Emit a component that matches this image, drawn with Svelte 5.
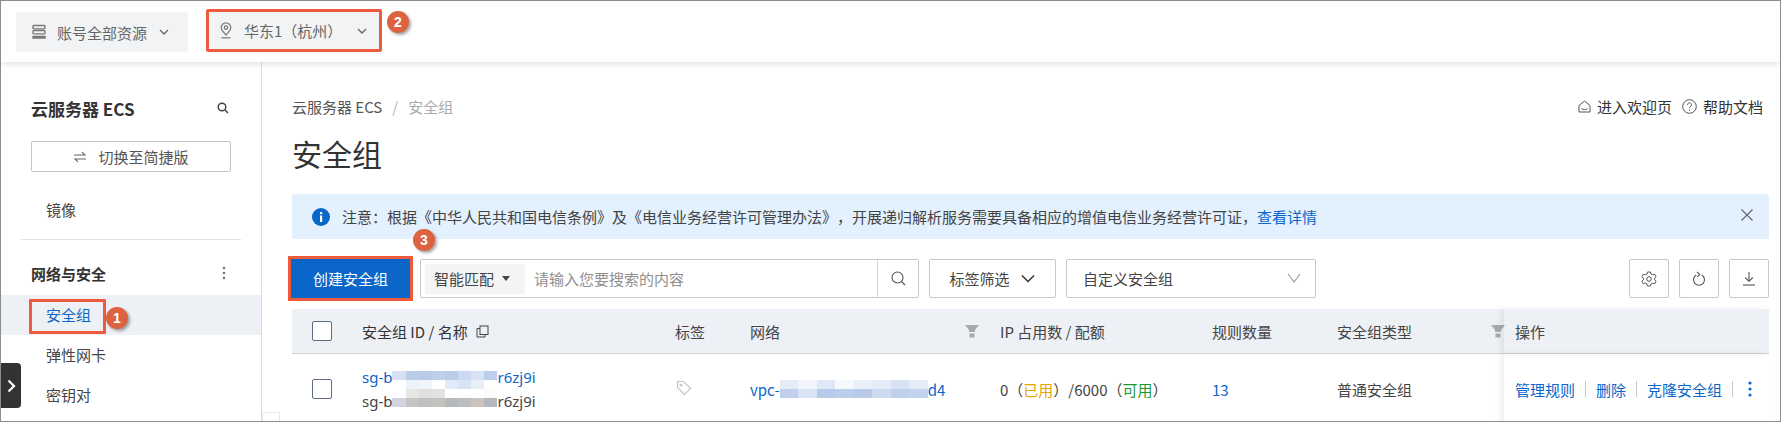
<script>
  const menu = ['弹性网卡', '密钥对'];
  const columns = [
    { label: '标签', width: 75 },
    { label: '网络', width: 250, filter: true },
    { label: 'IP 占用数 / 配额', width: 212 },
    { label: '规则数量', width: 125 },
    { label: '安全组类型', width: 167, filter: true }
  ];
  // blurred ids: each tile is [upper colour, lower colour]
  const blurTop = [['#d6e0f2', '#fff'], ['#bccdea', '#eef3fa'], ['#b9cbe9', '#f0f4fb'], ['#bfcfec', '#fff'], ['#bccdea', '#e2eaf7'], ['#ccd9f0', '#d8e3f4'], ['#d9e3f4', '#e9eff9'], ['#bdcdec', '#fff']];
  const blurBottom = [['#fff', '#d3d4e2'], ['#e6e6e5', '#c6c4c2'], ['#e0e0de', '#c0bfbd'], ['#e3e3e1', '#c3c2bf'], ['#fff', '#b5b9bd'], ['#fff', '#bdbec1'], ['#fff', '#ccc4bc'], ['#fbfbfb', '#b2b8be']];
  const blurVpc = [['#e4ecf8', '#bfcfec'], ['#f1f5fb', '#d8e3f4'], ['#dfe8f6', '#b8cae9'], ['#f6f8fc', '#bdcdec'], ['#eaf0fa', '#b9cbe9'], ['#e4ecf8', '#cedaf0'], ['#d6e1f3', '#bfcfec'], ['#e4ecf8', '#c3d2ee']];
</script>

<div class="page">
  <header class="topbar">
    <button class="scope">
      <svg width="16" height="16" viewBox="0 0 16 16" fill="none" stroke="#777" stroke-width="1.4"><rect x="2" y="1.500" width="12" height="3.400" rx="1"/><rect x="2" y="6.500" width="12" height="3.400" rx="1"/><path d="M2 12.500h12v1.500H2z"/></svg>
      <span class="scope-name">账号全部资源</span>
      <svg class="chev" width="12" height="12" viewBox="0 0 12 12" fill="none" stroke="#666" stroke-width="1.300"><path d="M2 4l4 4 4-4"/></svg>
    </button>
    <button class="scope region">
      <svg width="14" height="17" viewBox="0 0 14 17" fill="none" stroke="#777" stroke-width="1.200"><path d="M7 13C4.500 10.500 2.200 8.200 2.200 5.600a4.800 4.800 0 0 1 9.600 0C11.800 8.200 9.500 10.500 7 13z"/><circle cx="7" cy="5.600" r="1.700"/><path d="M2.500 15.800h9"/></svg>
      <span class="scope-name">华东1（杭州）</span>
      <svg class="chev" width="12" height="12" viewBox="0 0 12 12" fill="none" stroke="#666" stroke-width="1.300"><path d="M2 4l4 4 4-4"/></svg>
    </button>
  </header>

  <div class="content">
    <aside class="sidebar">
      <div class="side-title">
        <strong>云服务器 ECS</strong>
        <svg width="12" height="12" viewBox="0 0 12 12" fill="none" stroke="#444" stroke-width="1.500"><circle cx="5" cy="5" r="3.800"/><path d="M8 8l3 3"/></svg>
      </div>
      <button class="switch">
        <svg width="14" height="12" viewBox="0 0 14 12" fill="none" stroke="#666" stroke-width="1.100"><path d="M1 4h11L9 1.200M13 8H2l3 2.800"/></svg>
        切换至简捷版
      </button>
      <div class="item first">镜像</div>
      <div class="side-rule"></div>
      <div class="group">
        <strong>网络与安全</strong>
        <svg width="4" height="14" viewBox="0 0 4 14" fill="#777"><circle cx="2" cy="2" r="1.300"/><circle cx="2" cy="7" r="1.300"/><circle cx="2" cy="12" r="1.300"/></svg>
      </div>
      <div class="item active">安全组</div>
      {#each menu as m}
        <div class="item">{m}</div>
      {/each}
    </aside>

    <main class="main">
      <div class="crumbs">
        <div><span class="crumb">云服务器 ECS</span><span class="slash">/</span><span class="current">安全组</span></div>
        <div class="links">
          <svg width="13" height="13" viewBox="0 0 13 13" fill="none" stroke="#555" stroke-width="1"><path d="M1 5.500L6.500 1 12 5.500V12H1z"/><path d="M3.500 8.500c1.500 1.500 4.500 1.500 6 0"/></svg>
          <span class="link-text">进入欢迎页</span>
          <svg class="help" width="15" height="15" viewBox="0 0 15 15" fill="none" stroke="#555" stroke-width="1"><circle cx="7.500" cy="7.500" r="6.800"/><path d="M5.500 5.800a2 2 0 1 1 3.100 1.700c-.8.500-1.100.9-1.100 1.700M7.500 10.500v1.200"/></svg>
          <span class="link-text">帮助文档</span>
        </div>
      </div>
      <h1>安全组</h1>

      <div class="notice">
        <svg width="18" height="18" viewBox="0 0 18 18"><circle cx="9" cy="9" r="9" fill="#0a66c8"/><rect x="8" y="7.500" width="2.200" height="6.500" fill="#fff"/><rect x="8" y="4" width="2.200" height="2.200" fill="#fff"/></svg>
        <p>注意：根据《中华人民共和国电信条例》及《电信业务经营许可管理办法》，开展递归解析服务需要具备相应的增值电信业务经营许可证，<a href="#top">查看详情</a></p>
        <svg class="close" width="12" height="12" viewBox="0 0 12 12" fill="none" stroke="#666" stroke-width="1.200"><path d="M.5.500l11 11M11.500.500l-11 11"/></svg>
      </div>

      <div class="toolbar">
        <button class="create">创建安全组</button>
        <div class="search">
          <div class="match">智能匹配<i class="caret"></i></div>
          <span class="placeholder">请输入您要搜索的内容</span>
          <div class="search-btn">
            <svg width="15" height="15" viewBox="0 0 15 15" fill="none" stroke="#555" stroke-width="1.100"><circle cx="6.500" cy="6.500" r="5.500"/><path d="M10.500 10.500l3.500 3.500"/></svg>
          </div>
        </div>
        <button class="tag-filter">标签筛选
          <svg width="16" height="10" viewBox="0 0 16 10" fill="none" stroke="#333" stroke-width="1.500"><path d="M2 1.500l6 6 6-6"/></svg>
        </button>
        <div class="select">自定义安全组
          <svg width="14" height="11" viewBox="0 0 14 11" fill="none" stroke="#999" stroke-width="1.100"><path d="M1 1l6 8 6-8"/></svg>
        </div>
        <div class="tools">
          <button class="tool" aria-label="设置">
            <svg width="16" height="16" viewBox="0 0 16 16" fill="none" stroke="#555" stroke-width="1"><path d="M6.500 1h3l.5 2 1.800.9 1.900-.7 1.400 2.600-1.500 1.300v1.800l1.500 1.300-1.400 2.600-1.900-.7-1.800.9-.5 2h-3l-.5-2-1.800-.9-1.900.7L.9 10.200l1.500-1.300V7.100L.9 5.800l1.400-2.600 1.900.7L6 3z"/><circle cx="8" cy="8" r="2.300"/></svg>
          </button>
          <button class="tool" aria-label="刷新">
            <svg width="14" height="16" viewBox="0 0 14 16" fill="none" stroke="#555" stroke-width="1.100"><path d="M9.800 4A5.500 5.500 0 1 1 4.200 4"/><path d="M5 1l2.800 2.400L5 5.800"/></svg>
          </button>
          <button class="tool" aria-label="下载">
            <svg width="14" height="15" viewBox="0 0 14 15" fill="none" stroke="#555" stroke-width="1.100"><path d="M7 1v9M3.200 6.500L7 10.300l3.800-3.800"/><path d="M1 14h12"/></svg>
          </button>
        </div>
      </div>

      <div class="table">
        <div class="row head">
          <div class="cell-check"><span class="check"></span></div>
          <div class="col-id">安全组 ID / 名称
            <svg width="13" height="13" viewBox="0 0 13 13" fill="none" stroke="#444" stroke-width="1"><rect x="4" y="1" width="8" height="8.500"/><path d="M4 3.500H1V12h8V9.500"/></svg>
          </div>
          {#each columns as c}
            <div class="col" style="width: {c.width}px">
              {c.label}
              {#if c.filter}
                <svg class="funnel" width="14" height="14" viewBox="0 0 14 14" fill="#a9a9a9"><path d="M0 1h14L10 6v2H4V6z"/><rect x="4.500" y="9.500" width="5" height="4"/></svg>
              {/if}
            </div>
          {/each}
          <div class="col-ops head-ops">操作</div>
        </div>
        <div class="row body-row">
          <div class="cell-check"><span class="check"></span></div>
          <div class="col-id ids">
            <div class="id-line blue">sg-b<span class="mosaic up">{#each blurTop as b}<i style="background: linear-gradient({b[0]} 50%, {b[1]} 50%)"></i>{/each}</span>r6zj9i</div>
            <div class="id-line">sg-b<span class="mosaic down">{#each blurBottom as b}<i style="background: linear-gradient({b[0]} 50%, {b[1]} 50%)"></i>{/each}</span>r6zj9i</div>
          </div>
          <div class="col" style="width: 75px">
            <svg class="tag" width="16" height="16" viewBox="0 0 16 16" fill="none" stroke="#c4c4c4" stroke-width="1.200"><path d="M1.500 1.500h6l7 7-6 6-7-7z"/><circle cx="5" cy="5" r="1"/></svg>
          </div>
          <div class="col blue" style="width: 250px">vpc-<span class="mosaic wide">{#each blurVpc as b}<i style="background: linear-gradient({b[0]} 50%, {b[1]} 50%)"></i>{/each}</span>d4</div>
          <div class="col" style="width: 212px">0（<span class="used">已用</span>）/6000（<span class="free">可用</span>）</div>
          <div class="col blue" style="width: 125px">13</div>
          <div class="col" style="width: 167px">普通安全组</div>
          <div class="col-ops">
            <span class="blue">管理规则</span><i class="sep"></i>
            <span class="blue">删除</span><i class="sep"></i>
            <span class="blue">克隆安全组</span><i class="sep"></i>
            <svg class="more" width="4" height="16" viewBox="0 0 4 16" fill="#0a66c8"><circle cx="2" cy="2" r="1.600"/><circle cx="2" cy="8" r="1.600"/><circle cx="2" cy="14" r="1.600"/></svg>
          </div>
        </div>
      </div>
    </main>
  </div>

  <!-- overlays: collapse tab, page corner and the numbered annotations -->
  <div class="collapse">
    <svg width="9" height="14" viewBox="0 0 9 14" fill="none" stroke="#fff" stroke-width="2.200"><path d="M1.500 1.500L7 7l-5.500 5.500"/></svg>
  </div>
  <div class="corner"></div>
  <div class="mark-box"></div>
  <span class="badge b1">1</span>
  <span class="badge b2">2</span>
  <span class="badge b3">3</span>
</div>

<style>
  :global(body) {
    margin: 0;
    background: #fff;
  }

  .page {
    position: relative;
    box-sizing: border-box;
    width: 1781px;
    height: 422px;
    border: 1px solid #8c8c8c;
    overflow: hidden;
    display: flex;
    flex-direction: column;
    background: #fff;
    color: #333;
    font-family: "Noto Sans CJK SC", "Noto Sans", sans-serif;
    font-size: 15px;
    text-spacing-trim: space-all;
  }

  button {
    font: inherit;
    color: inherit;
    background: #fff;
    padding: 0;
    cursor: pointer;
  }

  .blue, a { color: #0a66c8; text-decoration: none; }

  .topbar {
    height: 61px;
    flex: none;
    display: flex;
    align-items: flex-start;
    gap: 18px;
    padding-left: 15px;
    box-sizing: border-box;
    box-shadow: 0 2px 6px rgba(0, 0, 0, .12);
    position: relative;
    z-index: 1;
  }

  .scope {
    display: flex;
    align-items: center;
    width: 172px;
    height: 40px;
    margin-top: 11px;
    padding-left: 15px;
    box-sizing: border-box;
    border: 0;
    border-radius: 2px;
    background: #f1f3f5;
    color: #666;
    white-space: nowrap;
  }
  .scope-name { margin-left: 10px; }
  .scope .chev { margin-left: 11px; }

  .region {
    width: 176px;
    height: 43px;
    margin-top: 8px;
    padding-left: 10px;
    border: 3px solid #ee5b3c;
  }
  .region .scope-name { margin-left: 11px; }
  .region .chev { margin-left: 14px; }

  .content { flex: 1; display: flex; min-height: 0; }

  .sidebar {
    width: 261px;
    flex: none;
    box-sizing: border-box;
    border-right: 1px solid #dcdcdc;
  }

  .side-title {
    display: flex;
    align-items: center;
    justify-content: space-between;
    height: 24px;
    margin-top: 34px;
    padding: 0 32px 0 30px;
  }
  .side-title strong { font-size: 17px; font-weight: 700; color: #333; }

  .switch {
    display: flex;
    align-items: center;
    justify-content: center;
    gap: 11px;
    width: 200px;
    height: 31px;
    margin: 21px 0 0 30px;
    border: 1px solid #c4c4c4;
    border-radius: 2px;
    color: #555;
  }

  .item {
    height: 40px;
    line-height: 40px;
    padding-left: 45px;
    color: #444;
  }
  .first { margin-top: 18px; }
  .active {
    background: #edf0f5;
    color: #0a66c8;
  }

  .side-rule { height: 1px; margin: 9px 20px 0; background: #e1e1e1; }

  .group {
    display: flex;
    align-items: center;
    justify-content: space-between;
    height: 55px;
    padding: 11px 35px 0 30px;
    box-sizing: border-box;
  }
  .group strong { font-weight: 700; font-size: 15px; }

  .main {
    flex: 1;
    min-width: 0;
    padding: 32px 11px 0 30px;
  }

  .crumbs {
    display: flex;
    justify-content: space-between;
    align-items: center;
    height: 24px;
    color: #555;
  }
  .slash { margin: 0 10px; color: #b4b4b4; }
  .current { color: #aaa; }
  .links { display: flex; align-items: center; color: #333; margin-right: 6px; }
  .link-text { margin-left: 6px; }
  .help { margin-left: 10px; }

  h1 {
    margin: 15px 0 0;
    font-size: 30px;
    line-height: 40px;
    font-weight: 400;
    color: #333;
  }

  .notice {
    display: flex;
    align-items: center;
    height: 45px;
    margin-top: 21px;
    padding: 0 16px 0 20px;
    box-sizing: border-box;
    background: #e3f0fd;
    border-radius: 2px;
  }
  .notice p { flex: 1; margin: 0 0 0 12px; color: #444; white-space: nowrap; }
  .close { margin-bottom: 3px; }

  .toolbar {
    display: flex;
    align-items: center;
    height: 39px;
    margin-top: 20px;
  }

  .create {
    width: 119px;
    height: 39px;
    flex: none;
    margin: 0 10px 0 -1px;
    border: 0;
    outline: 3px solid #ee5b3c;
    background: #0a66c8;
    color: #fff;
  }

  .search {
    display: flex;
    align-items: center;
    width: 499px;
    height: 39px;
    box-sizing: border-box;
    border: 1px solid #c8c8c8;
    border-radius: 2px;
  }
  .match {
    display: flex;
    align-items: center;
    gap: 8px;
    height: 30px;
    width: 100px;
    margin-left: 4px;
    padding-left: 9px;
    box-sizing: border-box;
    background: #f3f4f6;
    color: #444;
  }
  .caret {
    width: 0;
    height: 0;
    border: 4px solid transparent;
    border-top: 5px solid #444;
    border-bottom: 0;
  }
  .placeholder { flex: 1; margin-left: 9px; color: #909090; }
  .search-btn {
    width: 40px;
    height: 100%;
    display: flex;
    align-items: center;
    justify-content: center;
    border-left: 1px solid #d4d4d4;
  }

  .tag-filter {
    display: flex;
    align-items: center;
    justify-content: center;
    gap: 10px;
    width: 127px;
    height: 39px;
    margin-left: 10px;
    border: 1px solid #c8c8c8;
    border-radius: 2px;
    color: #444;
  }

  .select {
    display: flex;
    align-items: center;
    justify-content: space-between;
    width: 250px;
    height: 39px;
    margin-left: 10px;
    padding: 0 14px 0 16px;
    box-sizing: border-box;
    border: 1px solid #c8c8c8;
    border-radius: 2px;
    color: #444;
  }

  .tools { display: flex; gap: 10px; margin-left: auto; }
  .tool {
    display: flex;
    align-items: center;
    justify-content: center;
    width: 40px;
    height: 39px;
    box-sizing: border-box;
    border: 1px solid #c8c8c8;
    border-radius: 2px;
  }

  .table { margin-top: 11px; }

  .row { display: flex; align-items: center; }
  .head {
    height: 45px;
    box-sizing: border-box;
    background: #edf0f5;
    border-bottom: 1px solid #cfd2d6;
  }
  .body-row { height: 70px; }

  .cell-check { width: 70px; flex: none; padding-left: 20px; box-sizing: border-box; display: flex; }
  .check {
    width: 20px;
    height: 20px;
    box-sizing: border-box;
    border: 1px solid #5d6c80;
    border-radius: 2px;
    background: #fff;
  }

  .col-id {
    width: 313px;
    flex: none;
    display: flex;
    align-items: center;
    gap: 8px;
    white-space: nowrap;
  }
  .ids { display: block; }
  .id-line {
    display: flex;
    align-items: center;
    height: 24px;
    color: #444;
    font-family: "Noto Sans", sans-serif;
  }
  .id-line.blue { color: #0a66c8; }

  .mosaic {
    display: inline-flex;
    flex: none;
    width: 105px;
    height: 18px;
  }
  .mosaic.up { align-self: flex-end; }
  .mosaic.down { align-self: flex-start; }
  .mosaic.wide { width: 148px; }
  .mosaic i { flex: 1; }

  .col {
    flex: none;
    position: relative;
    display: flex;
    align-items: center;
    white-space: nowrap;
    color: #444;
  }
  .col.blue { color: #0a66c8; }
  .funnel { position: absolute; right: 21px; top: 3px; }
  .col:nth-child(7) .funnel { right: -1px; }
  .tag { margin: -2px 0 0 1px; }

  .used { color: #e6a400; }
  .free { color: #1a9a2c; }

  .col-ops {
    flex: 1;
    align-self: stretch;
    display: flex;
    align-items: center;
    padding-left: 11px;
    box-shadow: -4px 0 6px rgba(0, 0, 0, .06);
    white-space: nowrap;
    position: relative;
  }
  .head-ops { color: #444; }
  .sep {
    width: 1px;
    height: 16px;
    background: #c8c8c8;
    margin: 0 10px;
  }
  .more { margin-left: 5px; }

  .collapse {
    position: absolute;
    left: 0;
    top: 362px;
    width: 20px;
    height: 45px;
    display: flex;
    align-items: center;
    justify-content: center;
    background: #333;
    border-radius: 0 4px 4px 0;
  }

  .corner {
    position: absolute;
    left: 261px;
    bottom: 0;
    width: 18px;
    height: 9px;
    border: 1px solid #e8e8e8;
    border-bottom: 0;
    box-sizing: border-box;
  }

  .mark-box {
    position: absolute;
    left: 28px;
    top: 298px;
    width: 77px;
    height: 35px;
    box-sizing: border-box;
    border: 3px solid #ee5b3c;
    border-radius: 1px;
  }

  .badge {
    position: absolute;
    width: 22px;
    height: 22px;
    border-radius: 50%;
    background: #dd6240;
    color: #fff;
    font: 700 14px/22px "Liberation Sans", sans-serif;
    text-align: center;
    box-shadow: 2px 2px 3px rgba(0, 0, 0, .35);
    z-index: 3;
  }
  .b1 { left: 105px; top: 306px; }
  .b2 { left: 386px; top: 10px; }
  .b3 { left: 412px; top: 228px; }
</style>
